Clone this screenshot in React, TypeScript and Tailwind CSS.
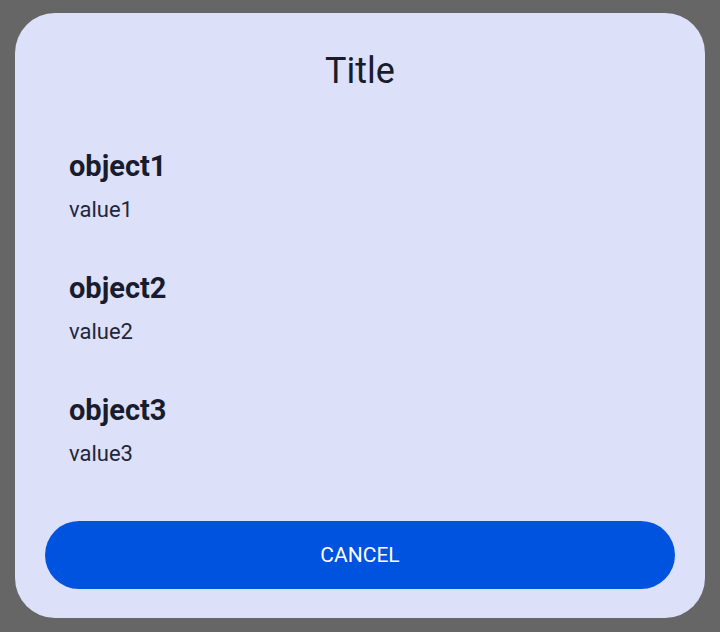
import React from "react";

const items = [
  { k: "object1", v: "value1" },
  { k: "object2", v: "value2" },
  { k: "object3", v: "value3" },
];

export default function App() {
  return (
    <div className="w-[720px] h-[632px] bg-[#666666] pt-[13px] pl-[15px]" style={{ fontFamily: "Roboto, 'Noto Sans', sans-serif" }}>
      <div className="w-[690px] h-[605px] bg-[#dce0f9] rounded-[40px] flex flex-col">
        <div className="h-[103px] pt-[36px] text-center text-[36px] leading-[44px] text-[#191c2d]">Title</div>
        <div className="flex flex-col pl-[54px]">
          {items.map((it) => (
            <div key={it.k} className="h-[122px] flex flex-col pt-[33px]">
              <div className="text-[29px] leading-[34px] font-bold text-[#191c2d]">{it.k}</div>
              <div className="mt-[14px] text-[22px] leading-[26px] text-[#23263a]">{it.v}</div>
            </div>
          ))}
        </div>
        <div className="px-[30px] mt-auto pb-[29px]">
          <button className="w-full h-[68px] rounded-full bg-[#0053de] text-white text-[21px] leading-none">CANCEL</button>
        </div>
      </div>
    </div>
  );
}
